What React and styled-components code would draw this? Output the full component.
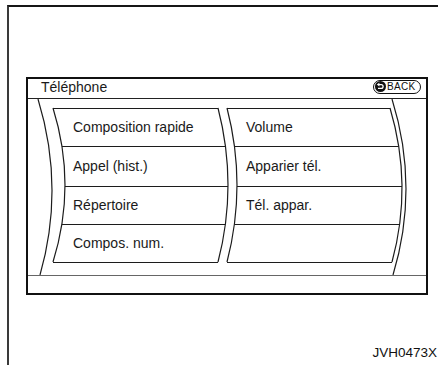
import styled, { createGlobalStyle } from 'styled-components';

const GlobalStyle = createGlobalStyle`
	html, body {
		margin: 0;
		padding: 0;
		background: #fff;
		overflow: hidden;
	}
	body {
		font-family: 'Liberation Sans', Arial, sans-serif;
		color: #1a1a1a;
	}
`;

const Frame = styled.div`
	box-sizing: border-box;
	margin: 5px 0 0 7px;
	height: 360px;
	border-top: 2px solid #161616;
	border-left: 2px solid #3a3a3a;
	padding: 70px 0 0 17px;
	display: flex;
	flex-direction: column;
`;

const Screen = styled.div`
	box-sizing: border-box;
	width: 402px;
	border: 2px solid #111;
	display: flex;
	flex-direction: column;
`;

const Header = styled.div`
	box-sizing: border-box;
	height: 20px;
	border-bottom: 1px solid #222;
	display: flex;
	align-items: center;
	justify-content: space-between;
	padding: 0 5px 4px 13px;
`;

const Title = styled.span`
	font-size: 14px;
	line-height: 16px;
`;

const BackButton = styled.div`
	box-sizing: border-box;
	width: 48px;
	height: 14px;
	border: 1.5px solid #111;
	border-radius: 8px;
	display: flex;
	align-items: center;
	gap: 1px;
	padding: 0 1px;
	font-size: 10px;
	line-height: 10px;
	letter-spacing: 0.3px;
	color: #111;
`;

const Menu = styled.div`
	position: relative;
	height: 176px;
`;

const Lines = styled.svg`
	position: absolute;
	left: 0;
	top: 0;
	pointer-events: none;
`;

const Grid = styled.div`
	position: relative;
	display: grid;
	grid-template-columns: 165px 164px;
	grid-template-rows: 38px 40px 38px 38px;
	grid-auto-flow: column;
	column-gap: 9px;
	padding: 9px 0 0 25px;
`;

const Cell = styled.div`
	display: flex;
	align-items: center;
	padding-left: ${(p) => (p.$right ? '19px' : '20px')};
	font-size: 14px;
	line-height: 16px;
	white-space: nowrap;
`;

const Footer = styled.div`
	height: 17px;
	border-top: 1px solid #666;
`;

const Caption = styled.div`
	margin-top: 50px;
	padding-right: 1px;
	text-align: right;
	font-size: 13.5px;
	line-height: 15px;
	color: #111;
`;

// curves in page coords: [x0, y0, x1, y1, x at middle]
const OUTER_L = [38, 99, 40, 275, 52];
const COL1_L = [53, 108, 53, 262, 65];
const COL1_R = [218, 108, 218, 262, 228];
const COL2_L = [227, 108, 227, 262, 237];
const COL2_R = [390, 108, 392, 262, 402];
const OUTER_R = [392, 99, 393, 275, 406];

const ROWS = [108, 146, 186, 224, 262];

const ctrl = ([x0, , x1, , mid]) => 2 * mid - (x0 + x1) / 2;

const curvePath = (c) => {
	const [x0, y0, x1, y1] = c;
	return `M${x0} ${y0} Q${ctrl(c)} ${(y0 + y1) / 2} ${x1} ${y1}`;
};

const xAt = (c, y) => {
	const [x0, y0, x1, y1] = c;
	const t = (y - y0) / (y1 - y0);
	return (1 - t) * (1 - t) * x0 + 2 * t * (1 - t) * ctrl(c) + t * t * x1;
};

const rowLine = (l, r, y) =>
	`M${xAt(l, y).toFixed(1)} ${y + 0.5} H${xAt(r, y).toFixed(1)}`;

const BackIcon = () => (
	<svg width="11" height="11" viewBox="0 0 11 11">
		<circle cx="5.5" cy="5.5" r="5.5" fill="#111" />
		<path d="M4 3.6 H6.2 A1.9 1.9 0 0 1 6.2 7.4 H3" stroke="#fff" strokeWidth="1.3" fill="none" />
		<polygon points="1.8,3.6 4.4,1.8 4.4,5.4" fill="#fff" />
	</svg>
);

const left = ['Composition rapide', 'Appel (hist.)', 'Répertoire', 'Compos. num.'];
const right = ['Volume', 'Apparier tél.', 'Tél. appar.', ''];

export default function App() {
	return (
		<>
			<GlobalStyle />
			<Frame>
				<Screen>
					<Header>
						<Title>Téléphone</Title>
						<BackButton>
							<BackIcon />
							<span>BACK</span>
						</BackButton>
					</Header>
					<Menu>
						<Lines width="398" height="176" viewBox="28 99 398 176">
							<g stroke="#1c1c1c" strokeWidth="1.2" fill="none">
								{[OUTER_L, COL1_L, COL1_R, COL2_L, COL2_R, OUTER_R].map((c, i) => (
									<path key={i} d={curvePath(c)} />
								))}
								{ROWS.map((y) => (
									<path key={'a' + y} d={rowLine(COL1_L, COL1_R, y)} strokeWidth="1" />
								))}
								{ROWS.map((y) => (
									<path key={'b' + y} d={rowLine(COL2_L, COL2_R, y)} strokeWidth="1" />
								))}
							</g>
						</Lines>
						<Grid>
							{left.map((t) => (
								<Cell key={t}>{t}</Cell>
							))}
							{right.map((t, i) => (
								<Cell key={'r' + i} $right>
									{t}
								</Cell>
							))}
						</Grid>
					</Menu>
					<Footer />
				</Screen>
				<Caption>JVH0473X</Caption>
			</Frame>
		</>
	);
}
